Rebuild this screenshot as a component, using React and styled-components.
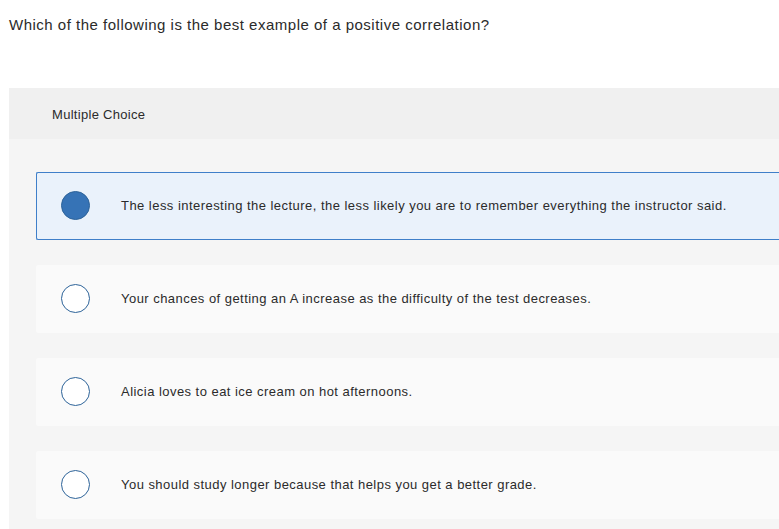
import React from 'react'
import styled, { createGlobalStyle } from 'styled-components'

const GlobalStyle = createGlobalStyle`
  html, body {
    margin: 0;
    padding: 0;
    background: #ffffff;
    overflow: hidden;
  }
  body {
    font-family: "Liberation Sans", Arial, sans-serif;
    color: #333333;
  }
`

const Page = styled.div`
  width: 779px;
  height: 529px;
  padding: 15px 0 0 9px;
  box-sizing: border-box;
  overflow: hidden;
`

const Question = styled.p`
  margin: 0;
  font-size: 15px;
  line-height: 20px;
  letter-spacing: 0.5px;
  color: #2b2b2b;
`

const Panel = styled.section`
  margin-top: 53px;
  background: #f5f5f5;
  margin-right: -20px;
  min-height: 460px;
`

const PanelHeader = styled.div`
  height: 51px;
  box-sizing: border-box;
  padding: 1px 0 0 43px;
  background: #f0f0f0;
  display: flex;
  align-items: center;
  font-size: 13px;
  letter-spacing: 0.3px;
  color: #2b2b2b;
`

const Options = styled.div`
  display: flex;
  flex-direction: column;
  gap: 25px;
  padding: 33px 0 0 27px;
`

const Option = styled.label`
  display: flex;
  align-items: center;
  height: 68px;
  box-sizing: border-box;
  padding: 0 0 2px 24px;
  border-radius: 2px;
  background: ${({ selected }) => (selected ? '#eaf2fb' : '#fafafa')};
  border: 1px solid ${({ selected }) => (selected ? '#3f7fc9' : 'transparent')};
  border-right: none;
  cursor: pointer;
`

const Radio = styled.span`
  width: 29px;
  height: 29px;
  box-sizing: border-box;
  border-radius: 50%;
  border: 1.5px solid #2d6399;
  background: ${({ selected }) => (selected ? '#3673b6' : '#ffffff')};
  flex-shrink: 0;
`

const OptionText = styled.span`
  margin-left: 31px;
  font-size: 13px;
  letter-spacing: 0.46px;
  color: #2b2b2b;
`

const choices = [
  'The less interesting the lecture, the less likely you are to remember everything the instructor said.',
  'Your chances of getting an A increase as the difficulty of the test decreases.',
  'Alicia loves to eat ice cream on hot afternoons.',
  'You should study longer because that helps you get a better grade.',
]

const App = () => {
  return (
    <Page>
      <GlobalStyle />
      <Question>Which of the following is the best example of a positive correlation?</Question>
      <Panel>
        <PanelHeader>Multiple Choice</PanelHeader>
        <Options>
          {choices.map((c, i) => (
            <Option key={i} selected={i === 0}>
              <Radio selected={i === 0} />
              <OptionText>{c}</OptionText>
            </Option>
          ))}
        </Options>
      </Panel>
    </Page>
  )
}

export default App
